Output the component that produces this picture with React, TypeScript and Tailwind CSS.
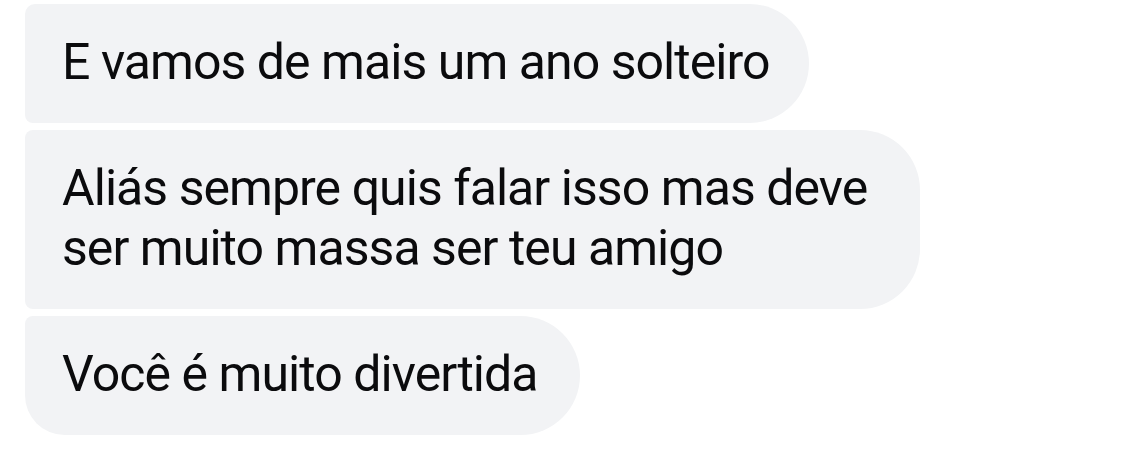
import React from "react";

type Msg = { lines: string[]; corners: string; extra: string };

const messages: Msg[] = [
  {
    lines: ["E vamos de mais um ano solteiro"],
    corners: "rounded-tl-[10px] rounded-bl-[8px] rounded-r-[60px]",
    extra: "pr-[39px]",
  },
  {
    lines: ["Aliás sempre quis falar isso mas deve", "ser muito massa ser teu amigo"],
    corners: "rounded-l-[8px] rounded-r-[60px]",
    extra: "pr-[53px]",
  },
  {
    lines: ["Você é muito divertida"],
    corners: "rounded-tl-[8px] rounded-bl-[40px] rounded-r-[60px]",
    extra: "pr-[42px]",
  },
];

const Bubble = ({ msg }: { msg: Msg }) => (
  <div
    className={`w-fit bg-[#f2f3f5] pl-[37px] pt-[28px] pb-[31px] text-[50px] leading-[60px] tracking-[-0.95px] text-[#0b0b0d] ${msg.corners} ${msg.extra}`}
  >
    {msg.lines.map((l, i) => (
      <div key={i} className="whitespace-nowrap">
        {l}
      </div>
    ))}
  </div>
);

export default function App() {
  return (
    <div
      className="w-[1147px] h-[455px] bg-white pl-[25px] pt-[4px] flex flex-col gap-[7px] overflow-hidden"
      style={{ fontFamily: "Roboto, 'Liberation Sans', sans-serif" }}
    >
      {messages.map((m, i) => (
        <Bubble key={i} msg={m} />
      ))}
    </div>
  );
}
